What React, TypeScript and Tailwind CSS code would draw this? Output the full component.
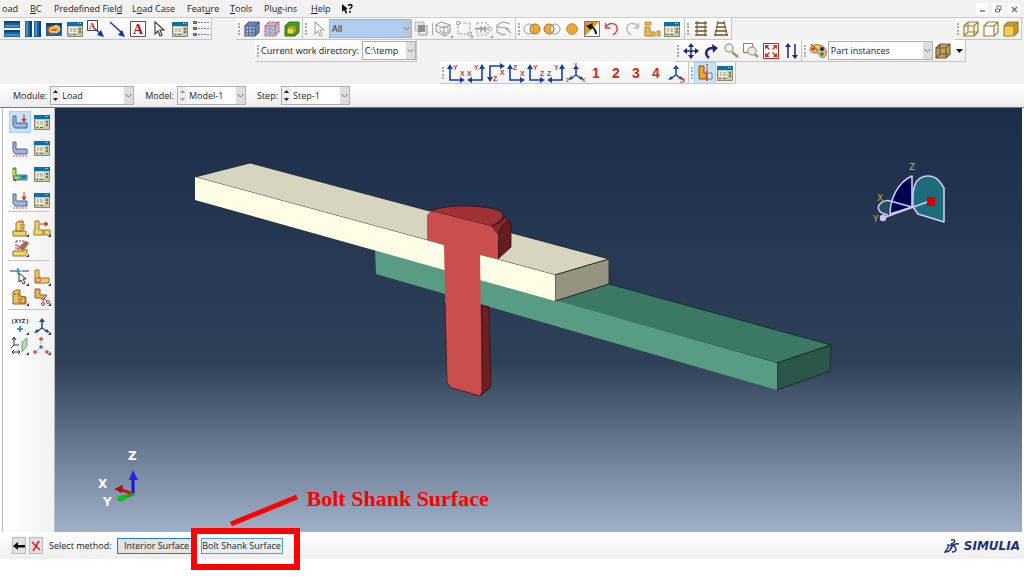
import type { ReactNode } from 'react';
import clsx from 'clsx';

type IconProps = { children: ReactNode };

const Icon = ({ children }: IconProps) => (
  <svg viewBox="0 0 20 20" className="h-5 w-5 shrink-0" fill="none" aria-hidden="true">
    {children}
  </svg>
);

const Blocks = ({ vertical }: { vertical?: boolean }) => (
  <Icon>
    <g transform={vertical ? 'rotate(90 10 10)' : undefined}>
      <path d="M2 2h16v7H2zM2 11h16v7H2z" fill="#1a629d" />
      <path d="M2 2h16v2H2zM2 11h16v2H2z" fill="#0b4476" />
      <path d="M3 6h14v2H3zM3 15h14v2H3z" fill="#4b92c4" />
    </g>
  </Icon>
);

const Overlay = () => (
  <Icon>
    <path d="M2 4h16v13H2z" fill="#1769a5" />
    <path d="M2 4h16v3H2z" fill="#0b4476" />
    <circle cx="8" cy="11" r="3.500" fill="#ffd46b" stroke="#e95a1b" strokeWidth="1.500" />
    <circle cx="12" cy="10" r="3.500" fill="#f5a828" stroke="#fff2b0" />
    <path d="M7 11h5" stroke="#c84316" strokeWidth="1.500" />
  </Icon>
);

const Manager = () => (
  <Icon>
    <path d="M2.500 3.500h15v14h-15z" fill="#c9c8ac" stroke="#8a8770" />
    <path d="M2 3h16v4H2z" fill="#086fb4" />
    <path d="M13 4h1v1h-1zM15 4h1v1h-1z" fill="#fff" />
    <path d="M4 8h8v6H4z" fill="#f5f4df" />
    <path d="M5 10h2M8 10h3M5 12h2M8 12h3" stroke="#8b8d78" />
    <path d="M14 9h2v2h-2zM14 12h2v2h-2zM4 15h2v1H4zM8 15h3v1H8z" fill="#777355" />
  </Icon>
);

const ArrowNote = ({ boxed }: { boxed?: boolean }) => (
  <Icon>
    {boxed && (
      <>
        <path d="M1.500 1.500h10v10h-10z" fill="#fff" stroke="#444" />
        <text x="3" y="10" fontSize="9" fontWeight="700" fill="#b32121" className="font-['Liberation_Serif']">A</text>
      </>
    )}
    <path d={boxed ? 'M9 10l6 5' : 'M3 3l11 10'} stroke="#1237a0" strokeWidth="1.400" />
    <path d="M18 18l-7-2 4-5z" fill="#1237a0" />
  </Icon>
);

const TextBox = () => (
  <Icon>
    <path d="M2.500 2.500h15v15h-15z" fill="#fff" stroke="#555" />
    <text x="5" y="15" fontSize="14" fontWeight="700" fill="#b81717" className="font-['Liberation_Serif']">A</text>
  </Icon>
);

const Cursor = ({ pale }: { pale?: boolean }) => (
  <Icon>
    <path d="M6 3v12l3-3 2 5 2-1-2-5h4z" fill="#fff" stroke={pale ? '#aaa' : '#333'} strokeWidth="1.100" />
  </Icon>
);

const Legend = () => (
  <Icon>
    <path d="M2.500 2.500h3v2h-3zM2.500 8.500h3v2h-3zM2.500 14.500h3v2h-3z" fill="#aaa06a" stroke="#554" />
    <path d="M7 3.500h11M7 9.500h11M7 15.500h11" stroke="#6a78a8" strokeDasharray="2 1" />
  </Icon>
);

const Cube = ({ front, line, top, mesh, dashed, inner }: {
  front: string; line: string; top?: string; mesh?: boolean; dashed?: boolean; inner?: boolean;
}) => (
  <Icon>
    <path d="M3 7l4-4h10v10l-4 4H3z" fill={top ?? front} />
    <path d="M3 7h10v10H3z" fill={front} />
    <path d="M3 7l4-4h10v10l-4 4H3zM3 7h10l4-4M13 7v10" stroke={line} strokeWidth="1.200" strokeDasharray={dashed ? '2 1' : undefined} />
    {mesh && !dashed && <path d="M6.500 7v10M10 7v10M3 10.500h10l4-4M3 14h10l4-4M5 5h10v10M10 3L6.500 7M13.500 3L10 7" stroke={line} strokeWidth=".8" />}
    {mesh && dashed && <path d="M5 10h6M5 14h6M8 8v8" stroke="#8a97bd" strokeWidth=".8" />}
    {inner && <path d="M7 3v10h10M7 13l-4 4" stroke={line} strokeWidth="1.100" />}
  </Icon>
);

const GreenCube = () => (
  <Icon>
    <path d="M3 7l4-4h10v10l-4 4H3z" fill="#38a51e" stroke="#376b18" />
    <path d="M5 9l2-2h7v6l-2 2H5z" fill="#ecdf47" stroke="#776c14" />
    <path d="M5 9h7v6M12 9l2-2" stroke="#776c14" />
  </Icon>
);

const Squares = () => (
  <Icon>
    <path d="M3 3h9v9H3z" fill="#e2e2e2" stroke="#b3b3b3" />
    <path d="M7 7h8v9H7z" fill="#e9e9e9" stroke="#999" />
    <path d="M6 6h7v7H6z" fill="#8d8d8d" />
  </Icon>
);

const Corner = () => <path d="M19 16v3h-3z" fill="#333" />;

const GreyBox = () => (
  <Icon>
    <path d="M2 6l5-3 9 3v7l-5 4-9-5zM2 6l8 3 6-3M10 9v8" stroke="#aaa" strokeWidth="1.300" />
    <path d="M6 9l5-2 3 2v4l-4 1-4-2z" stroke="#aaa" />
    <path d="M19 16v3h-3z" fill="#999" />
  </Icon>
);
const GreyFrame = () => (
  <Icon>
    <path d="M4 4h12v11H4z" stroke="#aaa" strokeDasharray="4 1" />
    <path d="M2.500 2.500h3v3h-3zM14.500 13.500h3v3h-3z" fill="#f7f7f7" stroke="#aaa" />
    <path d="M19 16v3h-3z" fill="#999" />
  </Icon>
);
const GreyPick = () => (
  <Icon>
    <path d="M3 4h11v12H3z" stroke="#999" strokeDasharray="2 2" />
    <path d="M1 10h4l2-2v4l2-3 2 3V8l2 2" stroke="#999" strokeWidth="1.300" />
    <circle cx="16" cy="10" r="2" stroke="#aaa" />
    <path d="M19 16v3h-3z" fill="#999" />
  </Icon>
);
const GreyHide = () => (
  <Icon>
    <path d="M3 6l6-3 7 2M3 6v7l6 3 3-1M3 7c5 4 8-1 10 3M11 9l6 5M11 9l4 1" stroke="#aaa" strokeWidth="1.300" />
  </Icon>
);

const Venn = ({ flip }: { flip?: boolean }) => (
  <Icon>
    <circle cx={flip ? 13 : 7} cy="10" r="5" fill="#fafafa" stroke="#999" />
    <circle cx={flip ? 7 : 13} cy="10" r="5" fill="#eda83a" stroke="#a87523" />
    <path d="M10 6c2 3 2 5 0 8-2-3-2-5 0-8z" fill={flip ? '#fff' : '#f7c465'} stroke="#997440" strokeWidth=".7" />
  </Icon>
);

const Disc = () => (
  <Icon><circle cx="10" cy="10" r="5.300" fill="#eda83a" stroke="#b4893d" /></Icon>
);

const Swap = () => (
  <Icon>
    <path d="M2 2h16v16H2z" fill="#fff" />
    <path d="M2 2h16L2 18z" fill="#e89617" />
    <path d="M2.500 2.500h15v15h-15z" stroke="#777" />
    <path d="M14 15c0-4-2-6-5-8" stroke="#111" strokeWidth="2" />
    <path d="M4 7l7-3-2 7z" fill="#111" />
  </Icon>
);

const Turn = ({ redo }: { redo?: boolean }) => (
  <Icon>
    <g transform={redo ? 'translate(20 0) scale(-1 1)' : undefined} stroke={redo ? '#b6b6b6' : '#dc4335'}>
      <path d="M4 8c3-5 10-4 11 0 1 3-1 6-4 8" strokeWidth="1.500" />
      <path d="M3.500 4v5h5" strokeWidth="1.300" />
    </g>
  </Icon>
);

const Parts = () => (
  <Icon>
    <path d="M3 8h5v5h5v4H3z" fill="#efb64d" stroke="#a88136" />
    <path d="M3 3h6v3H3zM15 12h3v5h-3z" fill="#f4b43c" stroke="#bb8f41" />
  </Icon>
);

const Rails = ({ persp }: { persp?: boolean }) => (
  <Icon>
    <path d={persp ? 'M7 2L4 17M13 2l3 15' : 'M6 2v15M14 2v15'} stroke="#9c8b69" strokeWidth="1.500" />
    <path
      d={persp ? 'M6 4h8M5 8h10M4 12h12M3 16h14' : 'M4 4h12M4 8h12M4 12h12M4 16h12'}
      stroke="#72562d"
      strokeWidth="1.300"
    />
  </Icon>
);

const Pan = () => (
  <Icon>
    <path d="M10 4v12M4 10h12" stroke="#24247c" strokeWidth="1.500" />
    <path d="M10 2l3 4H7zM10 18l3-4H7zM2 10l4-3v6zM18 10l-4-3v6z" fill="#24247c" />
  </Icon>
);
const Rotate = () => (
  <Icon>
    <path d="M8 17C3 13 5 7 12 7" stroke="#24247c" strokeWidth="2.500" />
    <path d="M11 3l6 4-5 5z" fill="#24247c" />
  </Icon>
);
const Lens = ({ area }: { area?: boolean }) => (
  <Icon>
    {area && <path d="M2.500 2.500h9v9h-9z" stroke="#ed5148" />}
    <path d="M11 11l6 5" stroke="#aa9052" strokeWidth="2.500" />
    <circle cx={area ? 11 : 8} cy={area ? 10 : 7} r="4" fill="#eee" stroke="#aaa" strokeWidth="1.500" />
  </Icon>
);
const Fit = () => (
  <Icon>
    <path d="M2.500 2.500h15v15h-15z" fill="#fff" stroke="#ad2e28" />
    <path d="M4 4h4L7 6l2 2-1 1-2-2-2 1zM16 4v4l-2-1-2 2-1-1 2-2-1-2zM4 16v-4l2 1 2-2 1 1-2 2 1 2zM16 16h-4l1-2-2-2 1-1 2 2 2-1z" fill="#df2e27" />
  </Icon>
);
const UpDown = () => (
  <Icon>
    <path d="M7 5v12M14 3v12" stroke="#24247c" strokeWidth="1.500" />
    <path d="M7 2l3 4H4zM14 18l3-4h-6z" fill="#24247c" />
  </Icon>
);
const Palette = () => (
  <Icon>
    <path d="M2 8c1-6 13-6 16 1 2 5-2 9-5 7-3-1 0-4-4-4-3 0-7 0-7-4z" fill="#ddb77c" stroke="#9a7945" />
    <circle cx="5" cy="8" r="1.500" fill="#cf2926" />
    <circle cx="9" cy="6" r="1.500" fill="#e8df25" />
    <circle cx="14" cy="8" r="2" fill="#13336e" />
    <circle cx="14" cy="13" r="1.700" fill="#238638" />
    <path d="M3 3l7 7" stroke="#bd5a20" strokeWidth="1.300" />
  </Icon>
);

const Axes = ({ v, h, flip, down }: { v: string; h: string; flip?: boolean; down?: boolean }) => (
  <Icon>
    <g transform={clsx(flip && 'translate(20 0) scale(-1 1)', down && 'translate(0 20) scale(1 -1)') || undefined}>
      <path d="M4 5v12h11" stroke="#153eaa" strokeWidth="1.600" />
      <path d="M4 1l3 5H1zM19 17l-5-3v6z" fill="#153eaa" />
    </g>
    <g fill="#d53b2c" fontSize="7" fontWeight="700" className="font-['Liberation_Sans']">
      <text x={flip ? 8 : 7} y={down ? 18 : 7}>{v}</text>
      <text x={flip ? 1 : 14} y={down ? 12 : 13}>{h}</text>
    </g>
  </Icon>
);

const Triad = ({ labels, edit, dark }: { labels?: boolean; edit?: boolean; dark?: boolean }) => (
  <Icon>
    <path d="M10 12V4M10 12l-6 4M10 12l6 4" stroke={dark ? '#1d4a76' : '#153eaa'} strokeWidth="1.500" />
    <path d="M10 2l3 4H7zM2 17l3-4 2 3zM18 17l-3-4-2 3z" fill={dark ? '#1d4a76' : '#153eaa'} />
    {labels && (
      <g fill="#d53b2c" fontSize="5" fontWeight="700" className="font-['Liberation_Sans']">
        <text x="8" y="4">Y</text><text x="0" y="19">Z</text><text x="16" y="19">X</text>
      </g>
    )}
    {edit && <path d="M12 15h4l2 3M18 15v4h-4" stroke="#d53b2c" />}
    {dark && <Corner />}
  </Icon>
);

const Section = () => (
  <Icon>
    <path d="M11 10h6v6h-6z" fill="#d9edf9" stroke="#777" />
    <path d="M4 3h5v7h3v6H4z" fill="#efa330" stroke="#755625" />
    <path d="M12 1v18" stroke="#e02920" strokeWidth="1.300" strokeDasharray="2 1" />
  </Icon>
);

const LShape = ({ arrow, teeth, rainbow }: { arrow?: boolean; teeth?: boolean; rainbow?: boolean }) => (
  <Icon>
    <path d="M3 4h3v7h11v5H5l-2-3z" fill={rainbow ? '#52bd84' : '#9db6dc'} stroke={rainbow ? '#4a856f' : '#4c618c'} />
    {rainbow && <path d="M4 6v5M5 14h3" stroke="#e0d630" strokeWidth="2" />}
    {rainbow && <path d="M11 13h5" stroke="#3369db" strokeWidth="3" />}
    {rainbow && <path d="M3 15l3 2" stroke="#d43335" strokeWidth="2" />}
    {arrow && <path d="M14 2v6M12 7l2 3 2-3z" stroke="#dc3428" fill="#dc3428" />}
    {teeth && <path d="M4 17v2M7 17v2M10 17v2M13 17v2M16 17v2" stroke="#dc4c40" />}
  </Icon>
);

const Yellow = ({ kind }: { kind: 'stack' | 'move' | 'erase' | 'edge' | 'block' | 'cut' }) => (
  <Icon>
    {kind === 'stack' && (
      <>
        <path d="M3 13h13v5H3zM6 5l3-2h4v10H6z" fill="#f0d468" stroke="#93772c" />
        <path d="M9 4h6M10 7h5M10 10h5" stroke="#d94032" strokeDasharray="2 1" />
      </>
    )}
    {kind === 'move' && (
      <>
        <path d="M3 3h4v9h4v5H2v-5h1zM12 12h6v5h-6z" fill="#f0d468" stroke="#93772c" />
        <path d="M8 6h6M13 4l3 2-3 2z" stroke="#d93025" fill="#d93025" />
      </>
    )}
    {kind === 'erase' && (
      <>
        <path d="M3 13h11l3-2v4l-2 3H3z" fill="#f0d468" stroke="#93772c" />
        <path d="M6 3h8v8H6z" stroke="#555" strokeDasharray="2 1" />
        <path d="M10 10l5-7 4 2-6 8z" fill="#88736d" stroke="#bb8733" />
        <path d="M7 7l5 4M8 11l5-5" stroke="#db4960" strokeWidth="1.300" />
      </>
    )}
    {kind === 'edge' && (
      <>
        <path d="M3 3h4v8h10v5H3z" fill="#efc96b" stroke="#927334" />
        <circle cx="6" cy="13" r="2.500" stroke="#e24d2b" />
      </>
    )}
    {kind === 'block' && (
      <>
        <path d="M3 5l3-2h4v6l6 1v7H3z" fill="#e8c15c" stroke="#80652c" />
        <path d="M4 7h5v9M11 11h4v5h-4z" stroke="#b33c20" strokeDasharray="2 1" />
      </>
    )}
    {kind === 'cut' && (
      <>
        <path d="M3 2h5v6h7l-4 5-3-2H3z" fill="#e8b258" stroke="#8b6834" />
        <circle cx="11" cy="17" r="1.500" stroke="#c62b38" />
        <circle cx="16" cy="15" r="1.500" stroke="#c62b38" />
        <path d="M10 10l5 4M13 10l-2 5" stroke="#777" />
      </>
    )}
    <Corner />
  </Icon>
);

const PointPick = () => (
  <Icon>
    <path d="M0 4h5M12 4h7" stroke="#333" />
    <path d="M8 1v6M5 4h6" stroke="#2386d9" strokeWidth="1.500" />
    <path d="M9 6v9l2-2 2 4 2-1-2-4h3z" fill="#fff" stroke="#333" />
    <Corner />
  </Icon>
);
const Xyz = () => (
  <Icon>
    <text x="10" y="7" fontSize="6" fontWeight="700" textAnchor="middle" fill="#222" className="font-['Liberation_Mono']">(XYZ)</text>
    <path d="M10 10v6M7 13h6" stroke="#2276cc" strokeWidth="1.500" />
    <Corner />
  </Icon>
);
const Plane = () => (
  <Icon>
    <path d="M4 2v7h5M4 9l-3 3M2 16h8M2 16l2-2M2 16l2 2M10 16l-2-2M10 16l-2 2M4 1L2 4M4 1l2 3" stroke="#333" />
    <path d="M12 6l5-4v8l-5 6z" fill="#ded278" stroke="#43a5cb" />
    <Corner />
  </Icon>
);
const Points = () => (
  <Icon>
    <path d="M9 3v8M9 11l-5 5M9 11l6 5" stroke="#8bbce8" strokeDasharray="2 1" />
    <path d="M9 1v4M7 3h4M3 14v4M1 16h4M15 14v4M13 16h4" stroke="#e43d2f" strokeWidth="1.300" />
    <circle cx="9" cy="11" r="1.800" fill="#2276cc" />
    <Corner />
  </Icon>
);

const Tool = ({ label, active, children }: { label: string; active?: boolean; children: ReactNode }) => (
  <button
    type="button"
    aria-label={label}
    className={clsx('flex h-5 w-5 shrink-0 items-center justify-center', active && 'bg-[#c6e3fb] outline outline-[#a9d1f2]')}
  >
    {children}
  </button>
);

const Grip = () => <span className="mx-0.5 h-3 w-0 shrink-0 border-l-2 border-dotted border-[#aaa]" />;

const Group = ({ className, children }: { className?: string; children: ReactNode }) => (
  <div className={clsx('flex h-full shrink-0 items-center border-r border-b border-[#c4c4c4] bg-linear-to-b from-white to-[#f1f1f1]', className)}>
    {children}
  </div>
);

const Combo = ({ label, value, width, spin, fill, hideLabel }: {
  label: string; value: string; width: string; spin?: 'on' | 'off'; fill?: boolean; hideLabel?: boolean;
}) => (
  <label className="flex shrink-0 items-center gap-[3px]">
    {!hideLabel && <span>{label}</span>}
    <span className={clsx('relative flex h-[19px] items-center border border-[#b0b0b0]', width, fill ? 'bg-[#aecdf0]' : 'bg-white')}>
      {spin && (
        <svg viewBox="0 0 9 17" className="h-full w-[9px] shrink-0 bg-[#eee]" aria-hidden="true">
          <path d="M2 6l2.500-3L7 6z" fill={spin === 'on' ? '#222' : '#999'} />
          <path d="M2 11l2.500 3L7 11z" fill={spin === 'on' ? '#222' : '#999'} />
        </svg>
      )}
      <select aria-label={label} className="h-full min-w-0 flex-1 appearance-none bg-transparent pl-0.5 outline-none">
        <option>{value}</option>
      </select>
      <svg viewBox="0 0 9 17" className={clsx('pointer-events-none absolute inset-y-0 right-0 h-full w-[9px]', fill ? 'bg-[#b5c8df]' : 'bg-[#dedede]')} aria-hidden="true">
        <path d="M1.500 7l3 3 3-3" fill="none" stroke="#777" />
      </svg>
    </span>
  </label>
);

const menus = [
  { before: '', key: '', after: 'oad', width: 'w-[28px]' },
  { before: '', key: 'B', after: 'C', width: 'w-[24px]' },
  { before: 'Predefined Fiel', key: 'd', after: '', width: 'w-[78px]' },
  { before: 'L', key: 'o', after: 'ad Case', width: 'w-[55px]' },
  { before: 'Feat', key: 'u', after: 're', width: 'w-[43px]' },
  { before: '', key: 'T', after: 'ools', width: 'w-[34px]' },
  { before: 'Plu', key: 'g', after: '-ins', width: 'w-[47px]' },
  { before: '', key: 'H', after: 'elp', width: 'w-[30px]' },
];

const sideTools: { label: string; icon: ReactNode }[][] = [
  [
    { label: 'Create load', icon: <LShape arrow /> },
    { label: 'Load manager', icon: <Manager /> },
    { label: 'Create boundary condition', icon: <LShape teeth /> },
    { label: 'Boundary condition manager', icon: <Manager /> },
    { label: 'Create predefined field', icon: <LShape rainbow /> },
    { label: 'Predefined field manager', icon: <Manager /> },
    { label: 'Create load case', icon: <LShape arrow teeth /> },
    { label: 'Load case manager', icon: <Manager /> },
  ],
  [
    { label: 'Suppress', icon: <Yellow kind="stack" /> },
    { label: 'Replace', icon: <Yellow kind="move" /> },
    { label: 'Remove', icon: <Yellow kind="erase" /> },
  ],
  [
    { label: 'Select edge', icon: <PointPick /> },
    { label: 'Partition edge', icon: <Yellow kind="edge" /> },
    { label: 'Partition cell', icon: <Yellow kind="block" /> },
    { label: 'Repair', icon: <Yellow kind="cut" /> },
  ],
  [
    { label: 'Datum point', icon: <Xyz /> },
    { label: 'Datum csys', icon: <Triad dark /> },
    { label: 'Datum plane', icon: <Plane /> },
    { label: 'Datum csys by three points', icon: <Points /> },
  ],
];

const Model = () => (
  <svg viewBox="55 108 967 424" preserveAspectRatio="xMidYMid meet" className="absolute inset-0 h-full w-full" role="img" aria-label="Bolted plates">
    {/* lower plate */}
    <g stroke="#0e2722" strokeWidth=".8" strokeLinejoin="round">
      <path d="M555 301l54-17 222 61-54 18z" fill="#3b7965" />
      <path d="M777 363l54-18-1 26-53 19z" fill="#2b5649" />
    </g>
    <path d="M375 249L777 363v27L376 274z" fill="#589c84" />
    {/* upper plate */}
    <g stroke="#222" strokeWidth=".8" strokeLinejoin="round">
      <path d="M195 177l55-14 359 96-54 16z" fill="#d7d5c0" />
      <path d="M555 275l54-16v25l-54 17z" fill="#959483" />
    </g>
    <path d="M195 177l360 98v26L195 200z" fill="#fffde5" />
    {/* bolt */}
    <g stroke="#341216" strokeWidth=".8" strokeLinejoin="round">
      <path d="M481 305l8 2 2 80-11 9z" fill="#6d1f22" />
      <path d="M431 211c15-7 52-6 66-1 7 3 9 7 0 13l-6 3z" fill="#a13233" />
      <path d="M498 235l5-11 6-3 2 3v23l-13 12z" fill="#651d20" />
      <path d="M491 226c6-2 11-4 13-9l6 4c-6 0-9 6-12 14z" fill="#852a2c" />
    </g>
    <path d="M427 215l4-4 60 15 7 9v24l-18-4 2 137-2 4-28-8-5-5-3-138-17-5z" fill="#c94e4d" />
    <path d="M445 303l2 80 5 5 28 8 2-4M482 305v87" stroke="#3b171c" strokeWidth=".8" fill="none" />
    {/* view compass */}
    <g stroke="#d2c8f4" strokeWidth="1.600" strokeLinejoin="round">
      <path d="M913 207c-1-17 1-31 15-31 8 0 12 5 16 12v34l-26-8z" fill="#1d6c7b" />
      <path d="M912 176v31l-22 7c0-15 8-32 22-38z" fill="#000053" />
      <path d="M890 201c-6-2-14 4-11 9 1 3 5 4 9 5l2-14z" fill="#20505f" stroke="none" />
      <path d="M912 207l-22-6c-6-2-14 4-11 9 1 3 5 4 9 5M883 218l47-17" fill="none" />
      <circle cx="883" cy="218" r="2.500" fill="#d2c8f4" />
    </g>
    <path d="M927 197h8v9h-8z" fill="#d60000" />
    <g fill="#bdb52b" fontSize="9" className="font-['DejaVu_Sans']">
      <text x="909" y="170">Z</text>
      <text x="877" y="201">X</text>
      <text x="873" y="222">Y</text>
    </g>
    {/* coordinate triad */}
    <path d="M133 494v-17" stroke="#1919d4" strokeWidth="3" />
    <path d="M133 470l5 10h-9z" fill="#2525e6" />
    <path d="M133 494l-11-4" stroke="#c81717" strokeWidth="3" />
    <path d="M114 489l9-4-1 8z" fill="#a31212" />
    <path d="M134 494l-9 3" stroke="#12a31c" strokeWidth="3" />
    <ellipse cx="122" cy="498" rx="5" ry="3" fill="#13bd1b" transform="rotate(-18 122 498)" />
    <g fill="#fff" fontSize="12" fontWeight="700" className="font-['DejaVu_Sans']">
      <text x="128" y="460">Z</text>
      <text x="98" y="488">X</text>
      <text x="103" y="506">Y</text>
    </g>
  </svg>
);

const App = () => {
  return (
    <div className="flex min-h-screen flex-col overflow-hidden bg-[#f2f2f2] pb-[18px] font-['Open_Sans',sans-serif] text-[9px] leading-3 text-[#222] shadow-[inset_0_-18px_white]">
      <header>
        <nav className="flex h-[18px] items-center border-b border-[#ccc] pl-0.5" aria-label="Main menu">
          {menus.map((item) => (
            <button type="button" key={item.after + item.key} className={clsx('shrink-0 text-left whitespace-nowrap', item.width)}>
              {item.before}
              <span className="underline underline-offset-1">{item.key}</span>
              {item.after}
            </button>
          ))}
          <button type="button" aria-label="Context help" className="flex items-center">
            <svg viewBox="0 0 12 12" className="h-3 w-3" aria-hidden="true">
              <path d="M1 1v8l2-2 2 4 1-1-1-4h2z" fill="#111" />
              <path d="M7.500 3c0-2 3.500-2 3.500 0 0 1.500-2 1.500-2 3.500M9 8v2" stroke="#111" strokeWidth="1.500" fill="none" />
            </svg>
          </button>
          <div className="ml-auto flex gap-1 pr-1">
            {['Minimize', 'Restore', 'Close'].map((name) => (
              <button type="button" key={name} aria-label={name} className="h-3 w-3 bg-white">
                <svg viewBox="0 0 12 12" fill="none" stroke="#60738c" strokeWidth="1.500">
                  {name === 'Minimize' && <path d="M4 8h5" />}
                  {name === 'Restore' && <path d="M3.500 6h4v3h-4zM5 5V3h4v4H8" strokeWidth="1" />}
                  {name === 'Close' && <path d="M4 4l5 5M9 4L4 9" />}
                </svg>
              </button>
            ))}
          </div>
        </nav>

        <div className="flex h-[22px] items-center">
          <Group className="gap-x-[1px] pl-0.5">
            <Tool label="Tile horizontally"><Blocks /></Tool>
            <Tool label="Tile vertically"><Blocks vertical /></Tool>
            <Tool label="Overlay plot"><Overlay /></Tool>
            <Tool label="Viewport manager"><Manager /></Tool>
            <Tool label="Text with arrow"><ArrowNote boxed /></Tool>
            <Tool label="Arrow"><ArrowNote /></Tool>
            <Tool label="Text"><TextBox /></Tool>
            <Tool label="Edit annotation"><Cursor /></Tool>
            <Tool label="Annotation manager"><Manager /></Tool>
            <Tool label="Annotation options"><Legend /></Tool>
          </Group>
          <Group className="ml-6">
            <Grip />
            <Tool label="Mesh"><Cube front="#a3b3d1" line="#405988" mesh /></Tool>
            <Tool label="Seeds"><Cube front="#b1bcda" line="#de4854" dashed mesh /></Tool>
            <Tool label="Native mesh"><GreenCube /></Tool>
          </Group>
          <Group className="pr-px">
            <Grip />
            <Tool label="Select"><Cursor pale /></Tool>
            <Combo label="Selection filter" value="All" width="w-[83px]" fill hideLabel />
            <Tool label="Highlight"><Squares /></Tool>
            <span className="mr-px h-3 border-l border-[#aaa]" />
            <Tool label="Select inside"><GreyBox /></Tool>
            <Tool label="Drag shape"><GreyFrame /></Tool>
            <Tool label="Select crossing"><GreyPick /></Tool>
            <Tool label="Select hidden"><GreyHide /></Tool>
          </Group>
          <Group className="pr-0.5">
            <Grip />
            <Tool label="Replace selected"><Venn /></Tool>
            <Tool label="Remove selected"><Venn flip /></Tool>
            <Tool label="Replace all"><Disc /></Tool>
            <Tool label="Invert display"><Swap /></Tool>
            <Tool label="Undo"><Turn /></Tool>
            <Tool label="Redo"><Turn redo /></Tool>
            <Tool label="Create display group"><Parts /></Tool>
            <Tool label="Display group manager"><Manager /></Tool>
          </Group>
          <Group>
            <Grip />
            <Tool label="Parallel view"><Rails /></Tool>
            <Tool label="Perspective view"><Rails persp /></Tool>
          </Group>
          <Group className="mr-0.5 ml-auto">
            <Grip />
            <Tool label="Wireframe"><Cube front="#faf7ef" line="#a17c32" inner /></Tool>
            <Tool label="Hidden line"><Cube front="#fff" line="#a17c32" /></Tool>
            <Tool label="Shaded"><Cube front="#f3cf54" top="#c99f2c" line="#a17c32" /></Tool>
          </Group>
        </div>

        <div className="flex h-[22px] items-center">
          <Group className="ml-[255px]">
            <Grip />
            <Combo label="Current work directory:" value="C:\temp" width="w-[54px]" />
          </Group>
          <Group className="ml-[258px]">
            <Grip />
            <Tool label="Pan"><Pan /></Tool>
            <Tool label="Rotate"><Rotate /></Tool>
            <Tool label="Magnify"><Lens /></Tool>
            <Tool label="Box zoom"><Lens area /></Tool>
            <Tool label="Auto fit"><Fit /></Tool>
            <Tool label="Cycle views"><UpDown /></Tool>
          </Group>
          <Group>
            <Grip />
            <Tool label="Color code"><Palette /></Tool>
            <Combo label="Color by" value="Part instances" width="w-[105px]" hideLabel />
            <Tool label="Render style"><Cube front="#bda16c" line="#785c28" inner /></Tool>
            <button type="button" aria-label="More render styles" className="w-3">
              <svg viewBox="0 0 12 8" className="w-full"><path d="M3 2h7L6.500 6z" fill="#111" /></svg>
            </button>
          </Group>
        </div>

        <div className="flex h-[22px] items-center">
          <Group className="ml-[440px] pr-0.5">
            <Grip />
            <Tool label="View XY"><Axes v="Y" h="X" /></Tool>
            <Tool label="View YX"><Axes v="Y" h="X" flip /></Tool>
            <Tool label="View XZ from top"><Axes v="Z" h="X" down /></Tool>
            <Tool label="View XZ"><Axes v="Z" h="X" /></Tool>
            <Tool label="View YZ"><Axes v="Y" h="Z" /></Tool>
            <Tool label="View ZY"><Axes v="Y" h="Z" flip /></Tool>
            <Tool label="Isometric view"><Triad labels /></Tool>
            {['1', '2', '3', '4'].map((n) => (
              <button type="button" key={n} className="w-5 text-center font-['Liberation_Sans'] text-sm font-bold text-[#cf2a1b]">
                {n}
              </button>
            ))}
            <Tool label="Edit view"><Triad edit /></Tool>
          </Group>
          <Group>
            <Grip />
            <Tool label="View cut" active><Section /></Tool>
            <Tool label="View cut manager"><Manager /></Tool>
          </Group>
        </div>

        <div className="flex h-6 items-center gap-[11px] border-b border-[#777] bg-linear-to-b from-white to-[#ededed] pl-[13px]">
          <Combo label="Module:" value="Load" width="w-[84px]" spin="on" />
          <Combo label="Model:" value="Model-1" width="w-[69px]" spin="off" />
          <Combo label="Step:" value="Step-1" width="w-[69px]" spin="on" />
        </div>
      </header>

      <main className="flex flex-1 bg-white pr-0.5">
        <aside className="ml-0.5 w-[53px] shrink-0 border-x border-[#bbb] bg-linear-to-r from-white to-[#f2f2f2] px-[5px] pt-1" aria-label="Toolbox">
          {sideTools.map((group, index) => (
            <div
              key={index}
              className={clsx(
                'grid grid-cols-[20px_20px] gap-x-[2px] border-[#c4c4c4] pl-0.5',
                index === 0 ? 'gap-y-1.5 pb-px' : 'border-t pt-1.5 pb-0.5'
              )}
            >
              {group.map((tool) => (
                <Tool key={tool.label} label={tool.label} active={tool.label === 'Create load'}>{tool.icon}</Tool>
              ))}
            </div>
          ))}
        </aside>
        <section className="relative flex-1 bg-[linear-gradient(#1b2d49,#2f4159_60%,#a1b0c9)]" aria-label="Viewport">
          <Model />
        </section>
      </main>

      <footer className="flex h-[27px] items-center bg-linear-to-b from-white to-[#efefef] pr-1 pl-3">
        <button type="button" aria-label="Back" className="mr-[3px] flex h-[17px] w-[14px] items-center border border-[#bbb] bg-[#e2e2e2]">
          <svg viewBox="0 0 12 12"><path d="M0 6l5-4v3h7v2.500H5V10z" fill="#000" /></svg>
        </button>
        <button type="button" aria-label="Cancel" className="mr-[6px] flex h-[17px] w-[14px] items-center border border-[#bbb] bg-[#e2e2e2]">
          <svg viewBox="0 0 12 12"><path d="M2 2l8 8M9 1L3 11" stroke="#ee1c24" strokeWidth="1.600" /></svg>
        </button>
        <span className="mr-[5px]">Select method:</span>
        <button type="button" className="h-4 w-[80px] shrink-0 border border-[#1b7cd0] bg-[#e4e4e4] whitespace-nowrap">
          Interior Surface
        </button>
        <div className="relative ml-1">
          <button type="button" className="h-4 w-[82px] border border-[#5b9bd5] bg-[#e6f1fb] whitespace-nowrap">
            Bolt Shank Surface
          </button>
          <div className="pointer-events-none absolute -top-[10px] -left-[10px] h-[42px] w-[109px] border-[6px] border-[#fe0000]" />
          <div className="pointer-events-none absolute bottom-[27px] left-[29px] flex items-start">
            <svg viewBox="0 0 70 34" className="h-[34px] w-[70px] shrink-0" aria-hidden="true">
              <path d="M1 31L67 4" stroke="#fe0000" strokeWidth="5" />
            </svg>
            <span className="ml-[7px] font-['Liberation_Serif',serif] text-[22px] leading-3 font-bold whitespace-nowrap text-[#fe0000]">
              Bolt Shank Surface
            </span>
          </div>
        </div>
        <a href="#" className="ml-auto flex items-center gap-1 text-[#1b2f7d]" aria-label="Simulia">
          <svg viewBox="0 0 16 16" className="h-4 w-4" fill="none" stroke="#1b2f7d" strokeWidth="1.400" aria-hidden="true">
            <path d="M7 2c5-1 5 2 0 4 4 0 2 3-1 4M5 7c-1 3-2 5-4 7 4 0 7-3 7-6 0-1-2-1-5-1M15 6c-4-1-6 1-4 3 2 3 1 5-3 5" />
          </svg>
          <span className="font-['DejaVu_Sans',sans-serif] text-xs font-bold italic">SIMULIA</span>
        </a>
      </footer>
    </div>
  );
};

export default App;
